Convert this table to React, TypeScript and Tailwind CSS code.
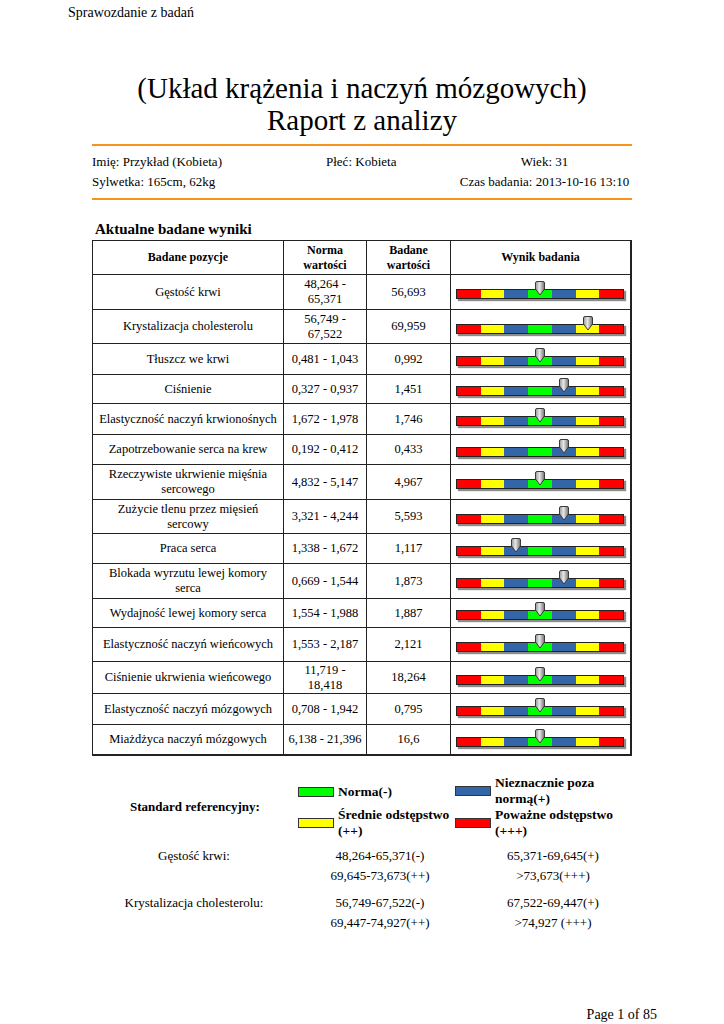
import React from 'react'

type Row = {
  name: React.ReactNode
  norm: React.ReactNode
  value: string
  pos: number
  h: string
}

const rows: Row[] = [
  { name: 'Gęstość krwi', norm: <>48,264 -<br />65,371</>, value: '56,693', pos: 3, h: 'h-[35px]' },
  { name: 'Krystalizacja cholesterolu', norm: <>56,749 -<br />67,522</>, value: '69,959', pos: 5, h: 'h-[34px]' },
  { name: 'Tłuszcz we krwi', norm: '0,481 - 1,043', value: '0,992', pos: 3, h: 'h-[31px]' },
  { name: 'Ciśnienie', norm: '0,327 - 0,937', value: '1,451', pos: 4, h: 'h-[29px]' },
  { name: 'Elastyczność naczyń krwionośnych', norm: '1,672 - 1,978', value: '1,746', pos: 3, h: 'h-[31px]' },
  { name: 'Zapotrzebowanie serca na krew', norm: '0,192 - 0,412', value: '0,433', pos: 4, h: 'h-[30px]' },
  { name: <>Rzeczywiste ukrwienie mięśnia<br />sercowego</>, norm: '4,832 - 5,147', value: '4,967', pos: 3, h: 'h-[35px]' },
  { name: <>Zużycie tlenu przez mięsień<br />sercowy</>, norm: '3,321 - 4,244', value: '5,593', pos: 4, h: 'h-[34px]' },
  { name: 'Praca serca', norm: '1,338 - 1,672', value: '1,117', pos: 2, h: 'h-[30px]' },
  { name: <>Blokada wyrzutu lewej komory<br />serca</>, norm: '0,669 - 1,544', value: '1,873', pos: 4, h: 'h-[35px]' },
  { name: 'Wydajność lewej komory serca', norm: '1,554 - 1,988', value: '1,887', pos: 3, h: 'h-[29px]' },
  { name: 'Elastyczność naczyń wieńcowych', norm: '1,553 - 2,187', value: '2,121', pos: 3, h: 'h-[34px]' },
  { name: 'Ciśnienie ukrwienia wieńcowego', norm: <>11,719 -<br />18,418</>, value: '18,264', pos: 3, h: 'h-[32px]' },
  { name: 'Elastyczność naczyń mózgowych', norm: '0,708 - 1,942', value: '0,795', pos: 3, h: 'h-[31px]' },
  { name: 'Miażdżyca naczyń mózgowych', norm: '6,138 - 21,396', value: '16,6', pos: 3, h: 'h-[29px]' },
]

const segments = ['bg-[#ff0000]', 'bg-[#ffff00]', 'bg-[#3366a8]', 'bg-[#00ff00]', 'bg-[#3366a8]', 'bg-[#ffff00]', 'bg-[#ff0000]']

function Marker({ pos }: { pos: number }) {
  // pos = segment index 0..6, marker sits over segment centre
  const left = pos * 24 + 12 - 6
  return (
    <svg width="12" height="15" viewBox="0 0 12 15" className="absolute top-[-8px]" style={{ left }}>
      <defs>
        <linearGradient id={`mg${pos}`} x1="0" x2="1" y1="0" y2="0">
          <stop offset="0" stopColor="#9a9a9a" />
          <stop offset="0.45" stopColor="#e6e6e6" />
          <stop offset="1" stopColor="#6f6f6f" />
        </linearGradient>
      </defs>
      <path d="M1.5 2 Q1.5 0.5 3 0.5 H9 Q10.5 0.5 10.5 2 V8 L6 14 L1.5 8 Z" fill={`url(#mg${pos})`} stroke="#3a3a3a" strokeWidth="1" />
    </svg>
  )
}

function Bar({ pos }: { pos: number }) {
  return (
    <div className="relative w-[168px] h-[10px] translate-y-[2px] shadow-[2px_2px_1px_rgba(0,0,0,0.45)]">
      <div className="flex h-full border border-[#222]">
        {segments.map((c, i) => (
          <div key={i} className={`flex-1 ${c}`} />
        ))}
      </div>
      <Marker pos={pos} />
    </div>
  )
}

function Swatch({ color }: { color: string }) {
  return <div className={`w-[36px] h-[10px] border border-[#333] shrink-0 ${color}`} />
}

export default function App() {
  return (
    <div className="w-[724px] h-[1024px] bg-white text-black font-['Liberation_Serif','Times_New_Roman',serif] flex flex-col">
      <div className="pt-[4px] pl-[68px] text-[14px] leading-[17px]">Sprawozdanie z badań</div>

      <div className="mt-[51px] text-center text-[29px] leading-[32px]">
        <div>(Układ krążenia i naczyń mózgowych)</div>
        <div>Raport z analizy</div>
      </div>

      <div className="mx-[92px] mt-[8px] h-[2px] bg-[#f7941d]" />
      <div className="mx-[92px] mt-[6px] grid grid-cols-[234px_131px_1fr] text-[13px] leading-[20px]">
        <div>Imię: Przykład (Kobieta)</div>
        <div>Płeć: Kobieta</div>
        <div className="text-center">Wiek: 31</div>
        <div>Sylwetka: 165cm, 62kg</div>
        <div />
        <div className="text-center">Czas badania: 2013-10-16 13:10</div>
      </div>
      <div className="mx-[92px] mt-[6px] h-[2px] bg-[#f7941d]" />

      <div className="mt-[20px] pl-[95px] text-[15px] leading-[18px] font-bold">Aktualne badane wyniki</div>

      <div className="ml-[92px] mt-[2px] w-[540px] border-l border-t border-[#222] border-r-2 border-b-2 text-[12.5px] leading-[15px]">
        <div className="grid grid-cols-[191px_83px_84px_1fr] h-[34px] border-b border-[#222] font-bold text-[12px]">
          <div className="flex items-center justify-center border-r border-[#222]">Badane pozycje</div>
          <div className="flex items-center justify-center text-center border-r border-[#222]">Norma<br />wartości</div>
          <div className="flex items-center justify-center text-center border-r border-[#222]">Badane<br />wartości</div>
          <div className="flex items-center justify-center">Wynik badania</div>
        </div>
        {rows.map((r, i) => (
          <div key={i} className={`grid grid-cols-[191px_83px_84px_1fr] ${r.h} ${i < rows.length - 1 ? 'border-b border-[#222]' : ''}`}>
            <div className="flex items-center justify-center text-center whitespace-nowrap border-r border-[#222]">{r.name}</div>
            <div className="flex items-center justify-center text-center whitespace-nowrap border-r border-[#222]">{r.norm}</div>
            <div className="flex items-center justify-center border-r border-[#222]">{r.value}</div>
            <div className="flex items-center pl-[5px]">
              <Bar pos={r.pos} />
            </div>
          </div>
        ))}
      </div>

      <div className="ml-[92px] mt-[19px] grid grid-cols-[206px_157px_1fr] grid-rows-[32px_32px] text-[13.5px] leading-[16px] font-bold">
        <div className="row-span-2 flex items-center justify-center text-[13px]">Standard referencyjny:</div>
        <div className="flex items-center gap-[4px] pt-[2px]">
          <Swatch color="bg-[#00ff00]" />
          <span>Norma(-)</span>
        </div>
        <div className="flex items-center gap-[4px]">
          <Swatch color="bg-[#3366a8]" />
          <span>Nieznacznie poza<br />normą(+)</span>
        </div>
        <div className="flex items-center gap-[4px]">
          <Swatch color="bg-[#ffff00]" />
          <span>Średnie odstępstwo<br />(++)</span>
        </div>
        <div className="flex items-center gap-[4px]">
          <Swatch color="bg-[#ff0000]" />
          <span>Poważne odstępstwo<br />(+++)</span>
        </div>
      </div>

      <div className="ml-[92px] mt-[7px] w-[550px] grid grid-cols-[204px_168px_1fr] text-[13px] leading-[20px] text-center">
        <div>Gęstość krwi:</div>
        <div>48,264-65,371(-)</div>
        <div>65,371-69,645(+)</div>
        <div />
        <div>69,645-73,673(++)</div>
        <div>&gt;73,673(+++)</div>
        <div className="mt-[7px]">Krystalizacja cholesterolu:</div>
        <div className="mt-[7px]">56,749-67,522(-)</div>
        <div className="mt-[7px]">67,522-69,447(+)</div>
        <div />
        <div>69,447-74,927(++)</div>
        <div>&gt;74,927 (+++)</div>
      </div>

      <div className="mt-auto pb-[1px] pr-[67px] text-right text-[14px] leading-[17px] h-[18px]">Page 1 of 85</div>
    </div>
  )
}
